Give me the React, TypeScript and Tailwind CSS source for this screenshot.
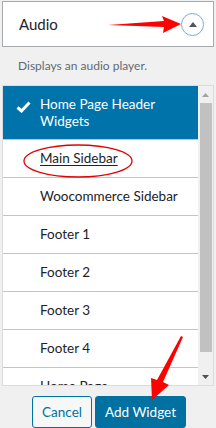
import React from "react";

const sidebars = [
  "Main Sidebar",
  "Woocommerce Sidebar",
  "Footer 1",
  "Footer 2",
  "Footer 3",
  "Footer 4",
  "Home Page",
];

export default function App() {
  return (
    <div
      className="relative w-[216px] h-[428px] overflow-hidden bg-[#f0f0f1] text-[#1d2327]"
      style={{ fontFamily: 'Lato, "Noto Sans", sans-serif' }}
    >
      {/* widget header */}
      <div className="mx-[2px] mt-[1px] h-[46px] border border-[#a7aaad] bg-white flex items-center justify-between pl-[16px] pr-[8px]">
        <span className="text-[15px] leading-none">Audio</span>
        <div className="w-[23px] h-[23px] rounded-full border border-[#72aee6] flex items-center justify-center mr-[1px]">
          <svg width="8" height="5" viewBox="0 0 8 5">
            <path d="M4 0 L8 5 L0 5 Z" fill="#50575e" />
          </svg>
        </div>
      </div>

      <p className="px-[18px] pt-[10px] text-[12px] leading-[18px] text-[#646970]">
        Displays an audio player.
      </p>

      {/* sidebar chooser */}
      <div className="mt-[10px] mx-[2px] h-[301px] border border-[#dcdcde] bg-white flex overflow-hidden">
        <ul className="flex-1 overflow-hidden">
          <li className="h-[53px] bg-[#0073aa] text-white flex items-start pt-[10px] pl-[13px] text-[13.5px] leading-[17px]">
            <svg width="15" height="12" viewBox="0 0 15 12" className="mt-[5px] mr-[9px] shrink-0">
              <path d="M1.5 6.5 L5.5 10 L13.5 1.5" stroke="#fff" strokeWidth="3" fill="none" strokeLinejoin="miter" />
            </svg>
            <span>Home Page Header<br />Widgets</span>
          </li>
          {sidebars.map((name, i) => (
            <li
              key={name}
              className="h-[38px] border-t border-[#c3c4c7] first:border-t-0 flex items-center pl-[37px] text-[13.5px]"
            >
              <span className={i === 0 ? "underline underline-offset-2" : ""}>{name}</span>
            </li>
          ))}
        </ul>
        {/* scrollbar */}
        <div className="w-[15px] bg-[#f0f0f0] flex flex-col items-center">
          <div className="h-[17px] flex items-center justify-center">
            <svg width="7" height="4" viewBox="0 0 7 4">
              <path d="M3.5 0 L7 4 L0 4 Z" fill="#a3a3a3" />
            </svg>
          </div>
          <div className="w-[12px] h-[249px] bg-[#c1c1c1]" />
          <div className="flex-1" />
          <div className="h-[17px] flex items-center justify-center">
            <svg width="7" height="4" viewBox="0 0 7 4">
              <path d="M0 0 L7 0 L3.5 4 Z" fill="#505050" />
            </svg>
          </div>
        </div>
      </div>

      {/* actions */}
      <div className="mt-[10px] flex justify-center gap-[3px] pl-[2px]">
        <button className="w-[60px] h-[32px] rounded-[3px] border border-[#0071a1] bg-[#f6f7f7] text-[#0071a1] text-[13.5px]">
          Cancel
        </button>
        <button className="w-[91px] h-[32px] rounded-[3px] border border-[#0071a1] bg-[#0071a1] text-white text-[13.5px]">
          Add Widget
        </button>
      </div>

      {/* annotations */}
      <svg className="absolute inset-0 pointer-events-none" width="216" height="428" viewBox="0 0 216 428">
        <path d="M108 25 L164 21 L162 16 L181 24 L163 33 L164 27 Z" fill="#ff0000" />
        <ellipse cx="78" cy="161" rx="54" ry="16" fill="none" stroke="#e30000" strokeWidth="1.3" />
        <path d="M183 337 L163 382 L169 385 L152 400 L151 378 L157 380 L181 336 Z" fill="#ff0000" />
      </svg>
    </div>
  );
}
